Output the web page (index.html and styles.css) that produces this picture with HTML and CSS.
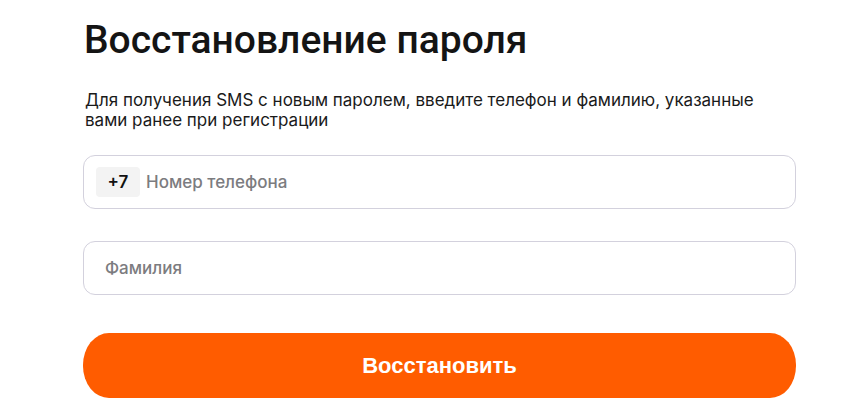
FILE: index.html
```html
<!DOCTYPE html>
<html lang="ru">
<head>
<meta charset="utf-8">
<link rel="stylesheet" href="styles.css">
</head>
<body>
<main class="page">
  <h1 class="title">Восстановление пароля</h1>
  <p class="lead">Для получения SMS с новым паролем, введите телефон и фамилию, указанные вами ранее при регистрации</p>
  <form class="form">
    <label class="field">
      <span class="prefix">+7</span>
      <input class="input" type="text" placeholder="Номер телефона">
    </label>
    <label class="field field--plain">
      <input class="input" type="text" placeholder="Фамилия">
    </label>
    <button class="submit" type="button">Восстановить</button>
  </form>
</main>
</body>
</html>
```
FILE: styles.css
```css
* { box-sizing: border-box; }
html, body { margin: 0; padding: 0; background: #fff; }
body { font-family: Inter, "Noto Sans", sans-serif; color: #141414; }
.page {
  width: 713px;
  margin-left: 83px;
  padding-top: 14px;
}
.title {
  margin: 0 0 0 1px;
  font-family: Roboto, Inter, sans-serif;
  font-size: 39px;
  font-weight: 500;
  line-height: 52px;
  letter-spacing: 0;
}
.lead {
  margin: 24px 0 0 2px;
  font-size: 17px;
  line-height: 20px;
  font-weight: 400;
  color: #1a1a1a;
}
.form {
  margin-top: 25px;
  display: flex;
  flex-direction: column;
}
.field {
  display: flex;
  align-items: center;
  height: 54px;
  border: 1px solid #d3d1dd;
  border-radius: 12px;
  padding: 0 12px;
  gap: 6px;
}
.field + .field { margin-top: 32px; }
.field--plain { padding-left: 21px; }
.prefix {
  display: flex;
  align-items: center;
  justify-content: center;
  width: 44px;
  height: 30px;
  border-radius: 4px;
  background: #f3f3f3;
  font-size: 17px;
  font-weight: 600;
  color: #111;
}
.input {
  flex: 1;
  border: 0;
  outline: 0;
  background: transparent;
  font-family: Inter, "Noto Sans", sans-serif;
  font-size: 17px;
  font-weight: 500;
  color: #141414;
  padding: 0;
}
.input::placeholder { color: #7c7c80; }
.submit {
  margin-top: 38px;
  height: 65px;
  border: 0;
  border-radius: 26px / 32px;
  background: #ff5c00;
  color: #fff;
  font-family: "Liberation Sans", Arial, sans-serif;
  font-weight: 700;
  font-size: 22px;
  cursor: pointer;
}
```
